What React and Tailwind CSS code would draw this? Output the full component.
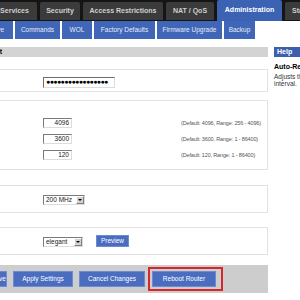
import React from 'react'

const topTabs = [
  { label: 'Services', w: 'w-[45px]', ml: '-ml-[8px]' },
  { label: 'Security', w: 'w-[40px]' },
  { label: 'Access Restrictions', w: 'w-[80px]' },
  { label: 'NAT / QoS', w: 'w-[48px]' },
  { label: 'Administration', w: 'w-[65px]', active: true },
  { label: 'Status', w: 'w-[40px]', left: true },
]

const subTabs = [
  { label: 'Commands', w: 'w-[45px]' },
  { label: 'WOL', w: 'w-[30px]' },
  { label: 'Factory Defaults', w: 'w-[61px]' },
  { label: 'Firmware Upgrade', w: 'w-[65px]' },
  { label: 'Backup', w: 'w-[31px]' },
]

function NumField({ value }) {
  return (
    <div className="w-[29px] h-[10px] bg-white border border-t-[#7a7a7a] border-l-[#7a7a7a] border-b-[#dcdcdc] border-r-[#dcdcdc] text-right pr-[2px] text-[6.5px] leading-[8px] text-[#222]">
      {value}
    </div>
  )
}

function Select({ value, w }) {
  return (
    <div className={`${w} h-[10px] bg-white border border-t-[#7a7a7a] border-l-[#7a7a7a] border-b-[#dcdcdc] border-r-[#dcdcdc] flex items-center justify-between pl-[2px] text-[6.5px] leading-[8px] text-[#222]`}>
      <span>{value}</span>
      <span className="w-[8px] h-[8px] bg-[#d4d0c8] border border-t-white border-l-white border-b-[#808080] border-r-[#808080] flex items-center justify-center">
        <span className="w-0 h-0 border-l-[2px] border-r-[2px] border-t-[2px] border-l-transparent border-r-transparent border-t-black" />
      </span>
    </div>
  )
}

function Button({ children, w }) {
  return (
    <div className={`${w} h-[16px] bg-[#4a6dc0] border border-[#6c8bd4] text-white text-[6.5px] leading-[14px] text-center whitespace-nowrap`}>
      {children}
    </div>
  )
}

export default function App() {
  return (
    <div className="w-[300px] h-[300px] overflow-hidden bg-white font-['Liberation_Sans',Arial,sans-serif]">
      {/* main tabs */}
      <div className="h-[21px] bg-[#151515] flex items-end gap-[3px] whitespace-nowrap">
        {topTabs.map((t) => (
          <div
            key={t.label}
            className={`${t.w} ${t.ml || ''} shrink-0 rounded-t-[2px] text-[7px] font-bold flex items-center ${t.left ? 'pl-[7px]' : 'justify-center'} ${t.active ? 'h-[21px] bg-[#3c62b4] text-white' : 'h-[18px] mb-[1px] bg-[#3b3b3b] text-[#cfcfcf]'}`}
          >
            {t.label}
          </div>
        ))}
      </div>

      {/* sub tabs */}
      <div className="h-[18px] flex gap-[2px] whitespace-nowrap">
        <div className="w-[40px] -ml-[27px] shrink-0 bg-[#4066b8] text-[#e4ebfb] text-[6.5px] flex items-center justify-end pr-[9px]">
          Keep Alive
        </div>
        {subTabs.map((t) => (
          <div key={t.label} className={`${t.w} shrink-0 bg-[#4066b8] text-[#e4ebfb] text-[6.5px] flex items-center justify-center`}>
            {t.label}
          </div>
        ))}
      </div>

      <div className="flex mt-[8px]">
        {/* main column */}
        <div className="w-[278px] -ml-[10px] shrink-0">
          <div className="h-[10px] bg-[#d3d3d3] flex whitespace-nowrap overflow-hidden">
            <div className="w-[60px] -ml-[48px] shrink-0 text-right text-[7px] font-bold leading-[10px] text-black">
              Management
            </div>
          </div>

          <div className="mt-[12px] h-[23px] border border-[#e2e2e2] pl-[52px] pt-[7px]">
            <div className="w-[72px] h-[11px] bg-white border border-t-[#6e6e6e] border-l-[#6e6e6e] border-b-[#dcdcdc] border-r-[#dcdcdc] text-[7px] leading-[8px] tracking-[-0.6px] pl-[2px] overflow-hidden whitespace-nowrap text-black">
              ●●●●●●●●●●●●●●●●●
            </div>
          </div>

          <div className="mt-[8px] h-[70px] border border-[#e2e2e2] pl-[52px] pt-[17px] flex flex-col gap-[6px]">
            {[
              ['4096', '(Default: 4096, Range: 256 - 4096)'],
              ['3600', '(Default: 3600, Range: 1 - 86400)'],
              ['120', '(Default: 120, Range: 1 - 86400)'],
            ].map(([v, d]) => (
              <div key={v} className="flex items-center">
                <NumField value={v} />
                <span className="ml-[109px] text-[5.5px] tracking-[-0.15px] text-[#555] whitespace-nowrap">{d}</span>
              </div>
            ))}
          </div>

          <div className="mt-[15px] h-[28px] border border-[#e2e2e2] pl-[52px] pt-[9px]">
            <Select value="200 MHz" w="w-[42px]" />
          </div>

          <div className="mt-[14px] h-[28px] border border-[#e2e2e2] pl-[52px] pt-[9px] flex items-start gap-[13px]">
            <Select value="elegant" w="w-[40px]" />
            <div className="-mt-[2px] w-[33px] h-[12px] bg-[#4a6dc0] border border-[#6c8bd4] text-white text-[6.5px] leading-[10px] text-center">
              Preview
            </div>
          </div>

          <div className="mt-[10px] h-[28px] bg-[#cdcdcd] flex items-center gap-[6px] whitespace-nowrap">
            <Button w="w-[17px]">Save</Button>
            <Button w="w-[60px]">Apply Settings</Button>
            <Button w="w-[66px]">Cancel Changes</Button>
            <div className="ml-[-3px] border-2 border-[#d9262a] p-[2px] pr-[5px]">
              <Button w="w-[64px]">Reboot Router</Button>
            </div>
          </div>
        </div>

        {/* help column */}
        <div className="ml-[6px] w-[150px] shrink-0">
          <div className="w-[40px] h-[10px] bg-[#3c5fae] text-white text-[7px] font-bold leading-[10px] pl-[3px]">
            Help
          </div>
          <div className="mt-[5px] text-[7px] font-bold leading-[9px] text-black whitespace-nowrap">
            Auto-Refresh (in seconds)
          </div>
          <div className="mt-[2px] text-[6.5px] leading-[7px] text-[#333] w-[130px]">
            Adjusts the Web GUI automatic refresh interval.
          </div>
        </div>
      </div>
    </div>
  )
}
